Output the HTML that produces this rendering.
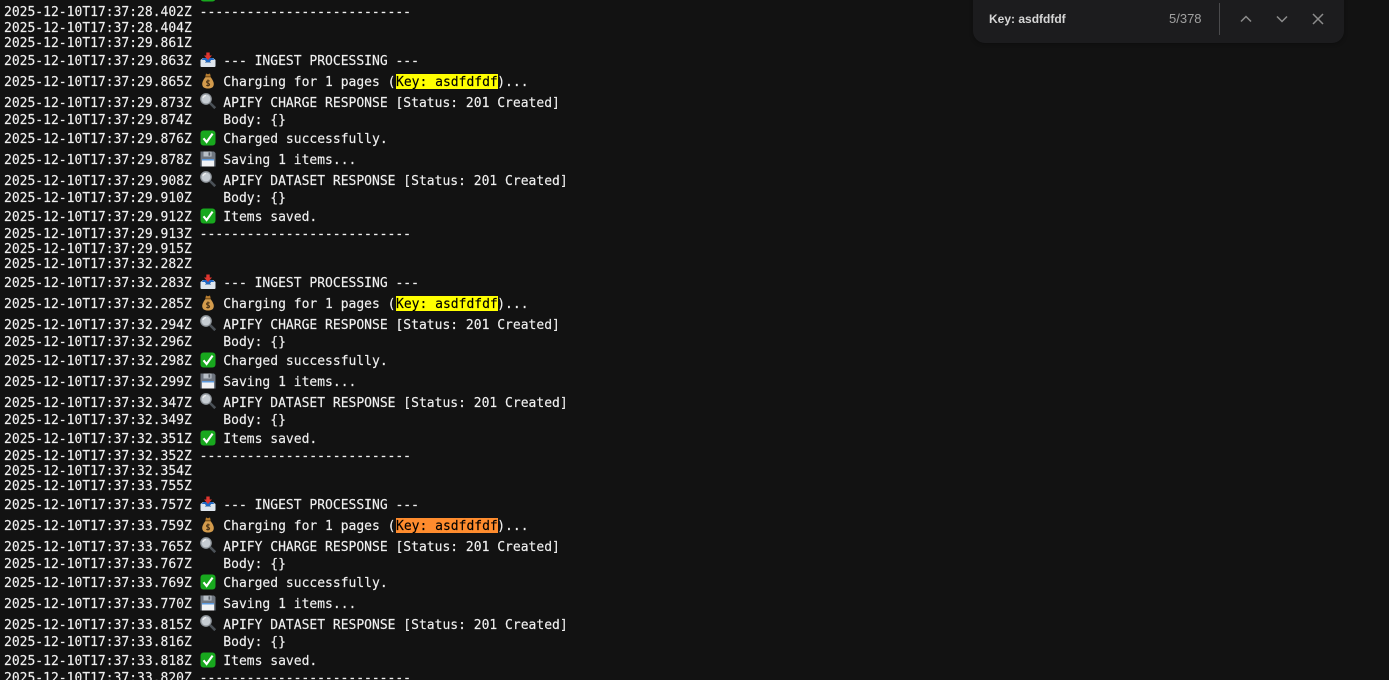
<!DOCTYPE html>
<html><head><meta charset="utf-8">
<style>
html,body{margin:0;padding:0;width:1389px;height:680px;overflow:hidden;background:#121212}
#w{position:relative;width:1389px;height:680px;overflow:hidden;background:#121212}
.r{position:absolute;left:4px;height:16px;font:13px/16px "DejaVu Sans Mono","Liberation Mono",monospace;color:#f0f0f0;-webkit-text-stroke:.15px #f0f0f0;white-space:pre}
.t{position:absolute;left:219.3px;top:0}
.m{color:#000;-webkit-text-stroke:.15px #000;background:#ffff00;position:absolute;left:392px;top:-1px;height:14px;padding-top:1px;width:101.8px;overflow:visible}
.o{background:#ff8c2e}
.e{position:absolute;left:196px;top:-2px;width:16px;height:16px;display:block}
.g{top:-3px}
#bar{position:absolute;left:973px;top:-12px;width:371px;height:55px;background:#1c1c1e;border-radius:12px;box-shadow:0 1px 4px rgba(0,0,0,.3)}
#q{position:absolute;left:16px;top:22px;font:bold 12px/18px "Liberation Sans",sans-serif;color:#d6d6d6}
#c{position:absolute;left:196px;top:22px;font:13px/18px "Liberation Sans",sans-serif;color:#a0a0a0}
#d{position:absolute;left:246px;top:15px;width:1px;height:32px;background:#4a4a4c}
#bar svg{position:absolute;top:24px;width:14px;height:14px;fill:none;stroke:#8c8c8c;stroke-width:1.5}
</style></head><body>
<svg width="0" height="0" style="position:absolute">
<symbol id="check" viewBox="0 0 16 16"><rect x=".5" y=".5" width="15" height="15" rx="3" fill="#18a81e"/><path d="M3.5 8.3 6.6 12 12.6 3.6" fill="none" stroke="#fff" stroke-width="2.1"/></symbol>
<symbol id="inbox" viewBox="0 0 16 16"><path d="M.5 8 3 6h10l2.500 2v6a1 1 0 0 1-1 1H1.500a1 1 0 0 1-1-1z" fill="#dfe6ee"/><path d="M1.500 8h3.500l1 2h4l1-2h3.500l-2-2h-9z" fill="#1e68c4"/><path d="M6.300 .5h3.400v3H12L8 8 4 3.500h2.300z" fill="#e0352f"/><path d="M5 10h6v1H5z" fill="#89a4c4"/></symbol>
<symbol id="bag" viewBox="0 0 16 16"><path d="M6 .5 5.300 3.500h5.400L10 .5 8 1.200z" fill="#b57b2e"/><path d="M5.500 4C3.500 6.500 2.200 9 2.200 11c0 3.200 2.300 4.500 5.800 4.500s5.800-1.300 5.800-4.500c0-2-1.300-4.500-3.300-7z" fill="#d39b4c"/><path d="M5.500 3.800h5" stroke="#6e4716" stroke-width="1"/><path d="M9.700 8.200C9 7.500 6.600 7.500 6.600 9s3 1 3 2.500-2.400 1.400-3.300.7M8 6.500v7" fill="none" stroke="#4b3215" stroke-width="1"/></symbol>
<symbol id="mag" viewBox="0 0 16 16"><circle cx="6" cy="6" r="5.200" fill="#c6ccd2" stroke="#8f959b" stroke-width="1.300"/><path d="M3 5a3.500 3.500 0 0 1 3-2.500" stroke="#f1f1f1" stroke-width="1.200" fill="none"/><path d="m10 10 5.200 5.200" stroke="#4b5157" stroke-width="2.600"/></symbol>
<symbol id="disk" viewBox="0 0 16 16"><path d="M.5 .5h13.500l1.500 1.500v13.500H.5z" fill="#6f7680"/><path d="M3.500 .5h8v5h-8z" fill="#b9c0c8"/><path d="M8.500 1.300h1.800v3.400H8.500z" fill="#596068"/><path d="M2 8h12v7.500H2z" fill="#f2f3f5"/><path d="M2 8h12v1.500H2z" fill="#5d9be0"/></symbol>
</svg>
<div id="w">

<div class="r" style="top:-12px">2025-12-10T17:37:28.400Z<svg class="e"><use href="#check"/></svg><span class="t">Items saved.</span></div>
<div class="r" style="top:5px">2025-12-10T17:37:28.402Z ---------------------------</div>
<div class="r" style="top:21px">2025-12-10T17:37:28.404Z</div>
<div class="r" style="top:36px">2025-12-10T17:37:29.861Z</div>

<div class="r" style="top:54px">2025-12-10T17:37:29.863Z<svg class="e"><use href="#inbox"/></svg><span class="t">--- INGEST PROCESSING ---</span></div>
<div class="r" style="top:75px">2025-12-10T17:37:29.865Z<svg class="e"><use href="#bag"/></svg><span class="t">Charging for 1 pages (             )...</span><span class="m">Key: asdfdfdf</span></div>
<div class="r" style="top:96px">2025-12-10T17:37:29.873Z<svg class="e g"><use href="#mag"/></svg><span class="t">APIFY CHARGE RESPONSE [Status: 201 Created]</span></div>
<div class="r" style="top:113px">2025-12-10T17:37:29.874Z<span class="t">Body: {}</span></div>
<div class="r" style="top:132px">2025-12-10T17:37:29.876Z<svg class="e"><use href="#check"/></svg><span class="t">Charged successfully.</span></div>
<div class="r" style="top:153px">2025-12-10T17:37:29.878Z<svg class="e"><use href="#disk"/></svg><span class="t">Saving 1 items...</span></div>
<div class="r" style="top:174px">2025-12-10T17:37:29.908Z<svg class="e g"><use href="#mag"/></svg><span class="t">APIFY DATASET RESPONSE [Status: 201 Created]</span></div>
<div class="r" style="top:191px">2025-12-10T17:37:29.910Z<span class="t">Body: {}</span></div>
<div class="r" style="top:210px">2025-12-10T17:37:29.912Z<svg class="e"><use href="#check"/></svg><span class="t">Items saved.</span></div>
<div class="r" style="top:227px">2025-12-10T17:37:29.913Z ---------------------------</div>
<div class="r" style="top:242px">2025-12-10T17:37:29.915Z</div>
<div class="r" style="top:257px">2025-12-10T17:37:32.282Z</div>

<div class="r" style="top:276px">2025-12-10T17:37:32.283Z<svg class="e"><use href="#inbox"/></svg><span class="t">--- INGEST PROCESSING ---</span></div>
<div class="r" style="top:297px">2025-12-10T17:37:32.285Z<svg class="e"><use href="#bag"/></svg><span class="t">Charging for 1 pages (             )...</span><span class="m">Key: asdfdfdf</span></div>
<div class="r" style="top:318px">2025-12-10T17:37:32.294Z<svg class="e g"><use href="#mag"/></svg><span class="t">APIFY CHARGE RESPONSE [Status: 201 Created]</span></div>
<div class="r" style="top:335px">2025-12-10T17:37:32.296Z<span class="t">Body: {}</span></div>
<div class="r" style="top:354px">2025-12-10T17:37:32.298Z<svg class="e"><use href="#check"/></svg><span class="t">Charged successfully.</span></div>
<div class="r" style="top:375px">2025-12-10T17:37:32.299Z<svg class="e"><use href="#disk"/></svg><span class="t">Saving 1 items...</span></div>
<div class="r" style="top:396px">2025-12-10T17:37:32.347Z<svg class="e g"><use href="#mag"/></svg><span class="t">APIFY DATASET RESPONSE [Status: 201 Created]</span></div>
<div class="r" style="top:413px">2025-12-10T17:37:32.349Z<span class="t">Body: {}</span></div>
<div class="r" style="top:432px">2025-12-10T17:37:32.351Z<svg class="e"><use href="#check"/></svg><span class="t">Items saved.</span></div>
<div class="r" style="top:449px">2025-12-10T17:37:32.352Z ---------------------------</div>
<div class="r" style="top:464px">2025-12-10T17:37:32.354Z</div>
<div class="r" style="top:479px">2025-12-10T17:37:33.755Z</div>

<div class="r" style="top:498px">2025-12-10T17:37:33.757Z<svg class="e"><use href="#inbox"/></svg><span class="t">--- INGEST PROCESSING ---</span></div>
<div class="r" style="top:519px">2025-12-10T17:37:33.759Z<svg class="e"><use href="#bag"/></svg><span class="t">Charging for 1 pages (             )...</span><span class="m o">Key: asdfdfdf</span></div>
<div class="r" style="top:540px">2025-12-10T17:37:33.765Z<svg class="e g"><use href="#mag"/></svg><span class="t">APIFY CHARGE RESPONSE [Status: 201 Created]</span></div>
<div class="r" style="top:557px">2025-12-10T17:37:33.767Z<span class="t">Body: {}</span></div>
<div class="r" style="top:576px">2025-12-10T17:37:33.769Z<svg class="e"><use href="#check"/></svg><span class="t">Charged successfully.</span></div>
<div class="r" style="top:597px">2025-12-10T17:37:33.770Z<svg class="e"><use href="#disk"/></svg><span class="t">Saving 1 items...</span></div>
<div class="r" style="top:618px">2025-12-10T17:37:33.815Z<svg class="e g"><use href="#mag"/></svg><span class="t">APIFY DATASET RESPONSE [Status: 201 Created]</span></div>
<div class="r" style="top:635px">2025-12-10T17:37:33.816Z<span class="t">Body: {}</span></div>
<div class="r" style="top:654px">2025-12-10T17:37:33.818Z<svg class="e"><use href="#check"/></svg><span class="t">Items saved.</span></div>
<div class="r" style="top:671px">2025-12-10T17:37:33.820Z ---------------------------</div>

<div id="bar">
<div id="q">Key: asdfdfdf</div>
<div id="c">5/378</div>
<div id="d"></div>
<svg style="left:266px" viewBox="0 0 14 14"><path d="M2 9.500 7 4.500l5 5"/></svg>
<svg style="left:302px" viewBox="0 0 14 14"><path d="M2 4.500 7 9.500l5-5"/></svg>
<svg style="left:338px" viewBox="0 0 14 14"><path d="M2 2l10 10M12 2 2 12"/></svg>
</div>
</div>
</body></html>
